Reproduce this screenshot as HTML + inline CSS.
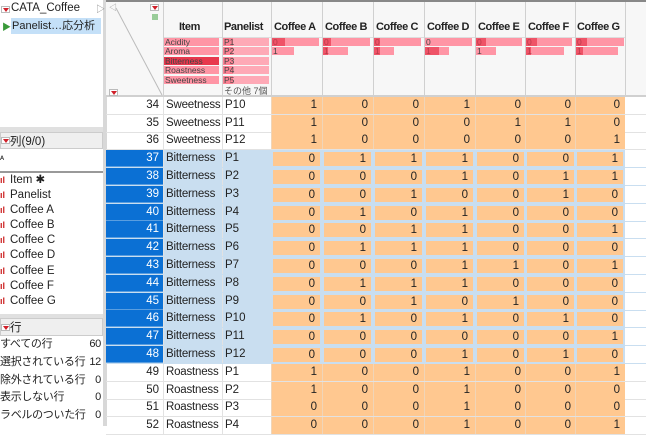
<!DOCTYPE html>
<html><head><meta charset="utf-8"><style>
*{margin:0;padding:0;box-sizing:border-box}
body{width:646px;height:426px;overflow:hidden;background:#fff;font-family:"Liberation Sans","Noto Sans CJK JP",sans-serif;font-size:11.5px;color:#222;position:relative}
.a{position:absolute;white-space:nowrap}
.tri{position:absolute;width:9px;height:7px;background:#fff;border:1px solid #bbb}
.tri:after{content:"";position:absolute;left:1px;top:1px;border-left:3px solid transparent;border-right:3px solid transparent;border-top:4px solid #d0202a}
.r{position:absolute;left:106px;width:540px;height:18px;border-bottom:1px solid #e2e2e2;font-size:11.5px}
.r div{position:absolute;top:0;height:17px;line-height:17px;white-space:nowrap;overflow:hidden}
.n{left:0;width:57px;text-align:right;padding-right:4px}
.i{left:57px;width:59px;padding-left:2px;border-left:1px solid #e2e2e2;letter-spacing:-0.2px}
.p{left:116px;width:49px;padding-left:2px;border-left:1px solid #e2e2e2}
.c{background:#ffc890;text-align:right;padding-right:5px;width:51px;border-left:1px solid #f0d5b8}
.s .n{background:#0b70d4;color:#fff;border-bottom:1px solid #5a9ee0}
.s .i,.s .p{background:#c9def0}
.s{border-bottom:1px solid #c9def0}
.s .c{border:2px solid #c9def0;border-bottom:1px solid #c9def0;line-height:14px}
.x1{left:165px}.x2{left:216px}.x3{left:267px}.x4{left:318px}.x5{left:369px}.x6{left:419px}.x7{left:469px;width:50px!important}
.hd{position:absolute;top:21px;font-weight:bold;font-size:11px;letter-spacing:-0.4px;white-space:nowrap}
.bar{position:absolute;height:8px;background:#ff95a5;font-size:8.5px;line-height:8px;color:#444;padding-left:1px;white-space:nowrap}
.dk{position:absolute;height:8px;background:#e8384d}
.cl div{height:15.1px;line-height:15px;font-size:11.5px}
.cl span{color:#c22;font-weight:bold;font-size:9px;display:inline-block;width:10px}
.rl div{position:relative;height:17.8px;line-height:17.8px;font-size:11px;letter-spacing:-0.3px}
.rl span{position:absolute;right:0}
</style></head><body>
<div class="a" style="left:0;top:0;width:104px;height:426px;background:#fff;border-right:1px solid #bbb"></div>
<div class="a" style="left:103px;top:0;width:4px;height:426px;background:#d8d8d8"></div>
<div class="tri" style="left:1px;top:6px"></div>
<div class="a" style="left:11px;top:2px;font-size:11.5px">CATA_Coffee</div>
<div class="a" style="left:96px;top:2px;font-size:9px;color:#888">▷</div>
<div class="a" style="left:2px;top:20px;color:#3a9a3a;font-size:9px">▶</div>
<div class="a" style="left:11px;top:18px;width:90px;height:16px;background:#c4e0f8;line-height:16px;padding-left:1px;font-size:11px;overflow:hidden">Panelist…応分析</div>
<div class="a" style="left:0;top:127px;width:103px;height:5px;background:#e0e0e0"></div>
<div class="a" style="left:0;top:132px;width:103px;height:17px;background:#efefef;border:1px solid #ccc"></div>
<div class="tri" style="left:1px;top:137px"></div>
<div class="a" style="left:10px;top:133px">列(9/0)</div>
<div class="a" style="left:0;top:154px;font-size:9px">ᴬ</div>
<div class="a" style="left:0;top:171px;width:103px;height:2px;background:#999"></div>
<div class="a cl" style="left:0;top:173px">
<div><span>ıl</span>Item ✱</div>
<div><span>ıl</span>Panelist</div>
<div><span>ıl</span>Coffee A</div>
<div><span>ıl</span>Coffee B</div>
<div><span>ıl</span>Coffee C</div>
<div><span>ıl</span>Coffee D</div>
<div><span>ıl</span>Coffee E</div>
<div><span>ıl</span>Coffee F</div>
<div><span>ıl</span>Coffee G</div>
</div>
<div class="a" style="left:0;top:314px;width:103px;height:4px;background:#e0e0e0"></div>
<div class="a" style="left:0;top:318px;width:103px;height:18px;background:#efefef;border:1px solid #ccc"></div>
<div class="tri" style="left:1px;top:324px"></div>
<div class="a" style="left:10px;top:319px">行</div>
<div class="a rl" style="left:0;top:336px;width:101px">
<div>すべての行<span>60</span></div>
<div>選択されている行<span>12</span></div>
<div>除外されている行<span>0</span></div>
<div>表示しない行<span>0</span></div>
<div>ラベルのついた行<span>0</span></div>
</div>
<div class="a" style="left:106px;top:0;width:540px;height:97px;background:#f7f7f7;border-bottom:2px solid #d0d0d0"></div>
<div class="a" style="left:106px;top:0;width:540px;height:2px;background:#888"></div>
<div class="a" style="left:163px;top:37px;width:462px;height:1px;background:#ddd"></div>
<svg class="a" style="left:106px;top:0" width="58" height="97"><line x1="10" y1="8" x2="56" y2="95" stroke="#bbb"/><text x="3" y="10" font-size="8" fill="#999">◁</text></svg>
<div class="tri" style="left:150px;top:4px"></div>
<div class="tri" style="left:109px;top:89px"></div>
<div class="a" style="left:152px;top:14px;width:6px;height:6px;background:#9c9"></div>
<div class="a" style="left:163px;top:2px;width:1px;height:95px;background:#d0d0d0"></div>
<div class="a" style="left:222px;top:2px;width:1px;height:95px;background:#d0d0d0"></div>
<div class="a" style="left:271px;top:2px;width:1px;height:95px;background:#d0d0d0"></div>
<div class="a" style="left:322px;top:2px;width:1px;height:95px;background:#d0d0d0"></div>
<div class="a" style="left:373px;top:2px;width:1px;height:95px;background:#d0d0d0"></div>
<div class="a" style="left:424px;top:2px;width:1px;height:95px;background:#d0d0d0"></div>
<div class="a" style="left:475px;top:2px;width:1px;height:95px;background:#d0d0d0"></div>
<div class="a" style="left:525px;top:2px;width:1px;height:95px;background:#d0d0d0"></div>
<div class="a" style="left:575px;top:2px;width:1px;height:95px;background:#d0d0d0"></div>
<div class="a" style="left:625px;top:2px;width:1px;height:95px;background:#d0d0d0"></div>
<div class="hd" style="left:179px">Item</div>
<div class="hd" style="left:224px">Panelist</div>
<div class="hd" style="left:274px">Coffee A</div>
<div class="hd" style="left:325px">Coffee B</div>
<div class="hd" style="left:376px">Coffee C</div>
<div class="hd" style="left:427px">Coffee D</div>
<div class="hd" style="left:478px">Coffee E</div>
<div class="hd" style="left:528px">Coffee F</div>
<div class="hd" style="left:577px">Coffee G</div>
<div class="bar" style="left:164px;top:38px;width:55px">Acidity</div>
<div class="bar" style="left:164px;top:47px;width:55px">Aroma</div>
<div class="bar" style="left:164px;top:57px;width:55px;background:#e8384d">Bitterness</div>
<div class="bar" style="left:164px;top:66px;width:55px">Roastness</div>
<div class="bar" style="left:164px;top:76px;width:55px">Sweetness</div>
<div class="dk" style="left:223px;top:38px;width:10px"></div><div class="bar" style="left:223px;top:38px;width:46px;background:rgba(255,149,165,.8)">P1</div>
<div class="dk" style="left:223px;top:47px;width:10px"></div><div class="bar" style="left:223px;top:47px;width:46px;background:rgba(255,149,165,.8)">P2</div>
<div class="dk" style="left:223px;top:57px;width:10px"></div><div class="bar" style="left:223px;top:57px;width:46px;background:rgba(255,149,165,.8)">P3</div>
<div class="dk" style="left:223px;top:66px;width:10px"></div><div class="bar" style="left:223px;top:66px;width:46px;background:rgba(255,149,165,.8)">P4</div>
<div class="dk" style="left:223px;top:76px;width:10px"></div><div class="bar" style="left:223px;top:76px;width:46px;background:rgba(255,149,165,.8)">P5</div>
<div class="a" style="left:224px;top:84px;font-size:9px;color:#555">その他 7個</div>
<div class="bar" style="left:272px;top:38px;width:47px">0</div><div class="dk" style="left:272px;top:38px;width:13px;opacity:.7"></div>
<div class="bar" style="left:272px;top:47px;width:22px">1</div>
<div class="bar" style="left:323px;top:38px;width:47px">0</div><div class="dk" style="left:323px;top:38px;width:8px;opacity:.7"></div>
<div class="bar" style="left:323px;top:47px;width:25px">1</div><div class="dk" style="left:323px;top:47px;width:5px;opacity:.7"></div>
<div class="bar" style="left:374px;top:38px;width:47px">0</div><div class="dk" style="left:374px;top:38px;width:6px;opacity:.7"></div>
<div class="bar" style="left:374px;top:47px;width:20px">1</div><div class="dk" style="left:374px;top:47px;width:6px;opacity:.7"></div>
<div class="bar" style="left:425px;top:38px;width:47px">0</div>
<div class="bar" style="left:425px;top:47px;width:24px">1</div><div class="dk" style="left:425px;top:47px;width:14px;opacity:.7"></div>
<div class="bar" style="left:476px;top:38px;width:46px">0</div><div class="dk" style="left:476px;top:38px;width:10px;opacity:.7"></div>
<div class="bar" style="left:476px;top:47px;width:20px">1</div>
<div class="bar" style="left:526px;top:38px;width:46px">0</div><div class="dk" style="left:526px;top:38px;width:11px;opacity:.7"></div>
<div class="bar" style="left:526px;top:47px;width:38px">1</div><div class="dk" style="left:526px;top:47px;width:5px;opacity:.7"></div>
<div class="bar" style="left:576px;top:38px;width:48px">0</div><div class="dk" style="left:576px;top:38px;width:11px;opacity:.7"></div>
<div class="bar" style="left:576px;top:47px;width:42px">1</div><div class="dk" style="left:576px;top:47px;width:7px;opacity:.7"></div>
<div class="r" style="top:97px"><div class="n">34</div><div class="i">Sweetness</div><div class="p">P10</div><div class="c x1">1</div><div class="c x2">0</div><div class="c x3">0</div><div class="c x4">1</div><div class="c x5">0</div><div class="c x6">0</div><div class="c x7">0</div></div>
<div class="r" style="top:115px"><div class="n">35</div><div class="i">Sweetness</div><div class="p">P11</div><div class="c x1">1</div><div class="c x2">0</div><div class="c x3">0</div><div class="c x4">0</div><div class="c x5">1</div><div class="c x6">1</div><div class="c x7">0</div></div>
<div class="r" style="top:132px"><div class="n">36</div><div class="i">Sweetness</div><div class="p">P12</div><div class="c x1">1</div><div class="c x2">0</div><div class="c x3">0</div><div class="c x4">0</div><div class="c x5">0</div><div class="c x6">0</div><div class="c x7">1</div></div>
<div class="r s" style="top:150px"><div class="n">37</div><div class="i">Bitterness</div><div class="p">P1</div><div class="c x1">0</div><div class="c x2">1</div><div class="c x3">1</div><div class="c x4">1</div><div class="c x5">0</div><div class="c x6">0</div><div class="c x7">1</div></div>
<div class="r s" style="top:168px"><div class="n">38</div><div class="i">Bitterness</div><div class="p">P2</div><div class="c x1">0</div><div class="c x2">0</div><div class="c x3">0</div><div class="c x4">1</div><div class="c x5">0</div><div class="c x6">1</div><div class="c x7">1</div></div>
<div class="r s" style="top:186px"><div class="n">39</div><div class="i">Bitterness</div><div class="p">P3</div><div class="c x1">0</div><div class="c x2">0</div><div class="c x3">1</div><div class="c x4">0</div><div class="c x5">0</div><div class="c x6">1</div><div class="c x7">0</div></div>
<div class="r s" style="top:204px"><div class="n">40</div><div class="i">Bitterness</div><div class="p">P4</div><div class="c x1">0</div><div class="c x2">1</div><div class="c x3">0</div><div class="c x4">1</div><div class="c x5">0</div><div class="c x6">0</div><div class="c x7">0</div></div>
<div class="r s" style="top:221px"><div class="n">41</div><div class="i">Bitterness</div><div class="p">P5</div><div class="c x1">0</div><div class="c x2">0</div><div class="c x3">1</div><div class="c x4">1</div><div class="c x5">0</div><div class="c x6">0</div><div class="c x7">1</div></div>
<div class="r s" style="top:239px"><div class="n">42</div><div class="i">Bitterness</div><div class="p">P6</div><div class="c x1">0</div><div class="c x2">1</div><div class="c x3">1</div><div class="c x4">1</div><div class="c x5">0</div><div class="c x6">0</div><div class="c x7">0</div></div>
<div class="r s" style="top:257px"><div class="n">43</div><div class="i">Bitterness</div><div class="p">P7</div><div class="c x1">0</div><div class="c x2">0</div><div class="c x3">0</div><div class="c x4">1</div><div class="c x5">1</div><div class="c x6">0</div><div class="c x7">1</div></div>
<div class="r s" style="top:275px"><div class="n">44</div><div class="i">Bitterness</div><div class="p">P8</div><div class="c x1">0</div><div class="c x2">1</div><div class="c x3">1</div><div class="c x4">1</div><div class="c x5">0</div><div class="c x6">0</div><div class="c x7">0</div></div>
<div class="r s" style="top:293px"><div class="n">45</div><div class="i">Bitterness</div><div class="p">P9</div><div class="c x1">0</div><div class="c x2">0</div><div class="c x3">1</div><div class="c x4">0</div><div class="c x5">1</div><div class="c x6">0</div><div class="c x7">0</div></div>
<div class="r s" style="top:310px"><div class="n">46</div><div class="i">Bitterness</div><div class="p">P10</div><div class="c x1">0</div><div class="c x2">1</div><div class="c x3">0</div><div class="c x4">1</div><div class="c x5">0</div><div class="c x6">1</div><div class="c x7">0</div></div>
<div class="r s" style="top:328px"><div class="n">47</div><div class="i">Bitterness</div><div class="p">P11</div><div class="c x1">0</div><div class="c x2">0</div><div class="c x3">0</div><div class="c x4">0</div><div class="c x5">0</div><div class="c x6">0</div><div class="c x7">1</div></div>
<div class="r s" style="top:346px"><div class="n">48</div><div class="i">Bitterness</div><div class="p">P12</div><div class="c x1">0</div><div class="c x2">0</div><div class="c x3">0</div><div class="c x4">1</div><div class="c x5">0</div><div class="c x6">1</div><div class="c x7">0</div></div>
<div class="r" style="top:364px"><div class="n">49</div><div class="i">Roastness</div><div class="p">P1</div><div class="c x1">1</div><div class="c x2">0</div><div class="c x3">0</div><div class="c x4">1</div><div class="c x5">0</div><div class="c x6">0</div><div class="c x7">1</div></div>
<div class="r" style="top:382px"><div class="n">50</div><div class="i">Roastness</div><div class="p">P2</div><div class="c x1">1</div><div class="c x2">0</div><div class="c x3">0</div><div class="c x4">1</div><div class="c x5">0</div><div class="c x6">0</div><div class="c x7">0</div></div>
<div class="r" style="top:399px"><div class="n">51</div><div class="i">Roastness</div><div class="p">P3</div><div class="c x1">0</div><div class="c x2">0</div><div class="c x3">0</div><div class="c x4">1</div><div class="c x5">0</div><div class="c x6">0</div><div class="c x7">0</div></div>
<div class="r" style="top:417px"><div class="n">52</div><div class="i">Roastness</div><div class="p">P4</div><div class="c x1">0</div><div class="c x2">0</div><div class="c x3">0</div><div class="c x4">1</div><div class="c x5">0</div><div class="c x6">0</div><div class="c x7">1</div></div>
</body></html>
